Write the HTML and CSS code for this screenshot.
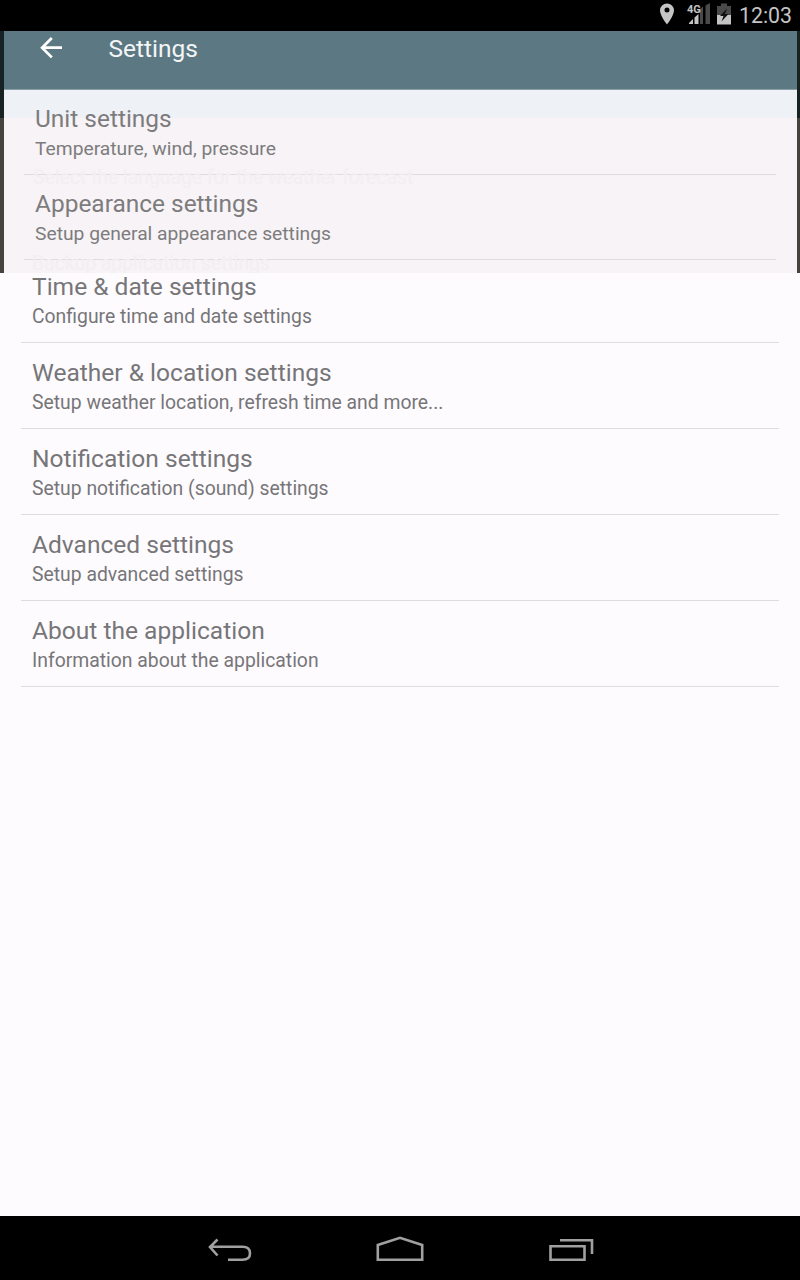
FILE: index.html
```html
<!DOCTYPE html>
<html lang="en">
<head>
<meta charset="utf-8">
<title>Settings</title>
<link rel="stylesheet" href="styles.css">
</head>
<body>
<div class="screen">
  <header class="status">
    <svg class="status-icons" width="76" height="31" viewBox="0 0 76 31">
      <path fill="#c4c4c4" fill-rule="evenodd" d="M9 3.500a7 7 0 0 0-7 7c0 5 7 14 7 14s7-9 7-14a7 7 0 0 0-7-7zm0 4a2.500 2.500 0 1 1 0 5 2.500 2.500 0 0 1 0-5z"/>
      <path fill="#4a4a4a" d="M42 9l3-2.500V24h-3zM47.500 5.500l4.500-2.500v21h-4.500z"/>
      <path fill="#c4c4c4" d="M31 24v-1l4-4v5zM36.500 17.500l4-3.500v10h-4z"/>
      <text x="29" y="13" class="network">4G</text>
      <path fill="#4a4a4a" d="M59 6h4V3.500h6V6h4v9H59z"/>
      <path fill="#c4c4c4" d="M59 15h14v9.500H59z"/>
      <path fill="#111" d="M69 8.500l-7 7.500h3.500l-2 5.500 7-7.500h-3.500z"/>
    </svg>
    <span class="clock">12:03</span>
  </header>
  <section class="incoming">
    <div class="panel">
      <div class="appbar">
        <svg class="arrow" width="24" height="24" viewBox="0 0 24 24" fill="none" stroke="#fff" stroke-width="2.700"><path d="M23 11.700H3.500M12.800 2L3.100 11.700l9.700 9.700"/></svg>
        <h1 class="heading">Settings</h1>
      </div>
      <div class="item small"><h2 class="title">Unit settings</h2><p class="summary">Temperature, wind, pressure</p></div>
      <div class="item small"><h2 class="title">Appearance settings</h2><p class="summary">Setup general appearance settings</p></div>
      <span class="ghost ghost-language">Select the language for the weather forecast</span>
      <span class="ghost ghost-backup">Backup application settings</span>
    </div>
  </section>
  <main class="list">
    <div class="item first"><h2 class="title">Time &amp; date settings</h2><p class="summary">Configure time and date settings</p></div>
    <div class="item"><h2 class="title">Weather &amp; location settings</h2><p class="summary">Setup weather location, refresh time and more...</p></div>
    <div class="item"><h2 class="title">Notification settings</h2><p class="summary">Setup notification (sound) settings</p></div>
    <div class="item"><h2 class="title">Advanced settings</h2><p class="summary">Setup advanced settings</p></div>
    <div class="item"><h2 class="title">About the application</h2><p class="summary">Information about the application</p></div>
  </main>
  <nav class="navbar">
    <svg width="800" height="64" viewBox="0 0 800 64" fill="none" stroke="#a0a0a0" stroke-width="2.600">
      <path d="M217.500 23.500L210 31l7.500 8.500M210 30.700h32.500c4.700 0 7.500 2.500 7.500 6.500s-2.800 6.500-7.500 6.500H228"/>
      <path d="M377.800 43.800V29L400 21.800 422.200 29v14.800z"/>
      <path d="M550.500 30.300h34V43.800h-34zM560 24.200h32V38"/>
    </svg>
  </nav>
</div>
</body>
</html>
```

FILE: styles.css
```css
* { box-sizing: border-box; }
body { margin: 0; font-family: Roboto, "Noto Sans", sans-serif; }
h1, h2, p { margin: 0; font-weight: 400; }
svg { display: block; }
.screen { width: 800px; height: 1280px; display: flex; flex-direction: column; background: #fefbff; overflow: hidden; }
.status { height: 31px; flex: none; background: #000; display: flex; justify-content: flex-end; padding-right: 8px; }
.network { font: bold 11px Roboto, sans-serif; fill: #c4c4c4; }
.clock { width: 53px; margin-left: 5px; font-size: 21.300px; line-height: 32px; color: #c4c4c4; white-space: nowrap; }
.incoming { height: 242px; flex: none; padding: 0 3px 0 4px; background: linear-gradient(#192222 87px, #444340 87px); }
.panel { height: 242px; position: relative; overflow: hidden; background: linear-gradient(#eef2f7 87px, #f7f3f6 87px); }
.appbar { height: 59px; display: flex; align-items: flex-start; padding: 5px 0 0 35px; background: #5c7983; border-bottom: 1px solid #8b9fa7; }
.heading { margin-left: 45.500px; line-height: 26px; font-size: 24.500px; color: #f3f5f7; }
.item { height: 86px; margin: 0 21px; padding: 15px 11px 0; border-bottom: 1px solid #dddddf; color: #767678; white-space: nowrap; }
.title { font-size: 24.550px; line-height: 30px; }
.summary { font-size: 19.350px; line-height: 29px; }
.first { height: 70px; padding-top: 0; }
.first .title { line-height: 28px; margin-bottom: 1px; }
.small { height: 85px; margin: 0 21px 0 20px; padding-top: 14px; color: #7d7c7d; }
.small .title { font-size: 24.450px; }
.small .summary { font-size: 19.250px; }
.list { flex: 1; }
.ghost { position: absolute; left: 29px; font-size: 19.350px; line-height: 18px; color: #f2eff2; white-space: nowrap; }
.ghost-language { top: 138px; }
.ghost-backup { left: 28px; top: 224px; }
.navbar { height: 64px; flex: none; background: #000; }
```
